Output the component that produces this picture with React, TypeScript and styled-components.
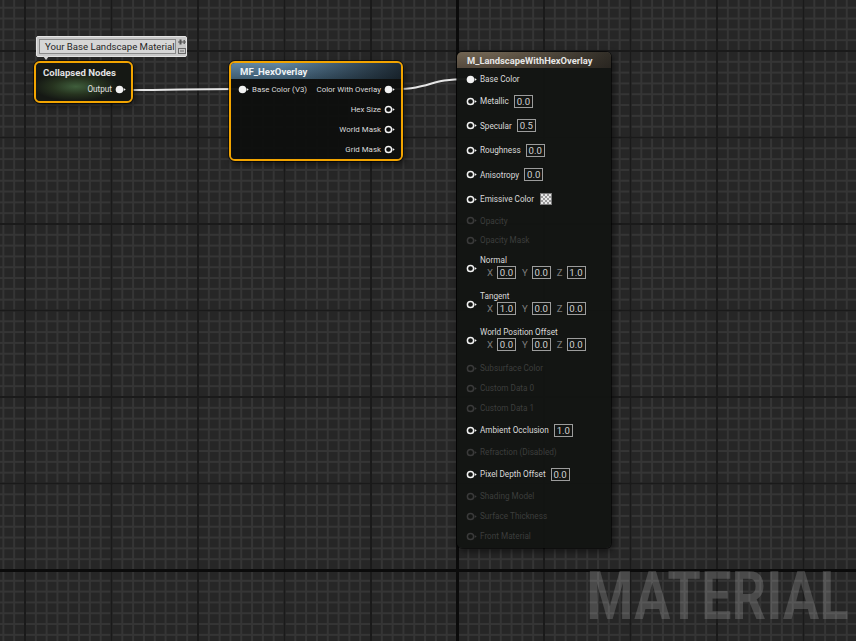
import React from "react";
import styled, { createGlobalStyle } from "styled-components";

const Global = createGlobalStyle`
  html, body { margin: 0; padding: 0; background: #262626; }
  body { font-family: Roboto, "Noto Sans", "Liberation Sans", sans-serif; }
  #root { width: 856px; height: 641px; }
`;

const Canvas = styled.div`
  position: relative;
  width: 856px;
  height: 641px;
  overflow: hidden;
  background-color: #262626;
  background-image:
    linear-gradient(to right, #0b0b0b 0 3px, transparent 3px),
    linear-gradient(to bottom, #0b0b0b 0 3px, transparent 3px),
    linear-gradient(to right, #1a1a1a 0 2px, transparent 2px),
    linear-gradient(to bottom, #1a1a1a 0 2px, transparent 2px),
    linear-gradient(to right, #353535 0 2px, transparent 2px),
    linear-gradient(to bottom, #353535 0 2px, transparent 2px);
  background-size: 3px 100%, 100% 3px, 86.5px 86.5px, 86.5px 86.5px,
    10.8125px 10.8125px, 10.8125px 10.8125px;
  background-position: 456px 0, 0 569px, 24px 50px, 24px 50px, 2.4px 6.75px,
    2.4px 6.75px;
  background-repeat: no-repeat, no-repeat, repeat, repeat, repeat, repeat;
`;

const Wires = styled.svg`
  position: absolute;
  left: 0;
  top: 0;
  width: 856px;
  height: 641px;
  pointer-events: none;
`;

/* ---------- pins ---------- */
const PinSvg = styled.svg`
  flex: none;
  width: 11px;
  height: 9px;
  display: block;
`;

type PinProps = { filled?: boolean; disabled?: boolean };
const Pin = ({ filled, disabled }: PinProps) => {
  const c = disabled ? "#3a3a3a" : "#f2f2f2";
  return (
    <PinSvg viewBox="0 0 11 9">
      {filled ? (
        <circle cx="4.5" cy="4.5" r="3.8" fill={c} />
      ) : (
        <circle cx="4.5" cy="4.5" r="3.1" fill="none" stroke={c} strokeWidth="1.5" />
      )}
      <polygon points="8.7,2.9 10.7,4.5 8.7,6.1" fill={c} />
    </PinSvg>
  );
};

/* ---------- comment bubble ---------- */
const Comment = styled.div`
  position: absolute;
  left: 36px;
  top: 36px;
  width: 151px;
  height: 21px;
  box-sizing: border-box;
  padding: 2px 1px 2px 2px;
  display: flex;
  gap: 2px;
  background: #c9c9c9;
  border: 1px solid #e4e4e4;
  border-radius: 2px;
  &::after {
    content: "";
    position: absolute;
    left: 6px;
    bottom: -4px;
    width: 0;
    height: 0;
    border-left: 3px solid transparent;
    border-right: 3px solid transparent;
    border-top: 4px solid #d8d8d8;
  }
`;

const CommentText = styled.div`
  flex: 1;
  display: flex;
  align-items: center;
  padding-left: 5px;
  border: 1px solid #8a8a8a;
  background: #d6d6d6;
  color: #262626;
  font-size: 9.6px;
  white-space: nowrap;
`;

const CommentIcons = styled.div`
  flex: none;
  display: flex;
  flex-direction: column;
  justify-content: space-between;
  width: 8px;
`;

const TinyIcon = styled.svg`
  display: block;
  width: 8px;
  height: 6px;
`;

/* ---------- generic node frame ---------- */
const SelectedNode = styled.div<{ $x: number; $y: number; $w: number; $h: number }>`
  position: absolute;
  left: ${(p) => p.$x}px;
  top: ${(p) => p.$y}px;
  width: ${(p) => p.$w}px;
  height: ${(p) => p.$h}px;
  box-sizing: border-box;
  border: 2px solid #f2a400;
  border-radius: 6px;
  box-shadow: 0 0 0 1px rgba(0, 0, 0, 0.55), 2px 3px 6px rgba(0, 0, 0, 0.5);
  overflow: hidden;
  display: flex;
  flex-direction: column;
`;

/* collapsed node */
const CollapsedBody = styled.div`
  flex: 1;
  display: flex;
  flex-direction: column;
  background: radial-gradient(ellipse 45% 38% at 42% 62%, #3f5e3c 0%, #26331f 55%, #151814 100%);
  border-radius: 4px;
`;

const CollapsedTitle = styled.div`
  padding: 4px 0 0 7px;
  height: 14px;
  color: #e2e2e2;
  font-size: 9.6px;
  font-weight: 700;
  white-space: nowrap;
`;

const OutRow = styled.div`
  display: flex;
  align-items: center;
  justify-content: flex-end;
  gap: 3px;
  height: 16px;
  padding-right: 5px;
  color: #e0e0e0;
  font-size: 8.2px;
`;

/* function node */
const FuncHeader = styled.div`
  height: 16px;
  padding-left: 9px;
  display: flex;
  align-items: center;
  background-image: linear-gradient(to right, rgba(0, 0, 0, 0) 30%, rgba(10, 14, 18, 0.75) 100%),
    linear-gradient(to bottom, #6186a3 0%, #3e5c71 100%);
  color: #eef2f5;
  font-size: 9.6px;
  font-weight: 700;
`;

const FuncBody = styled.div`
  flex: 1;
  background: rgba(14, 15, 14, 0.96);
  display: flex;
  flex-direction: column;
`;

const FuncRow = styled.div`
  height: 20px;
  display: flex;
  align-items: center;
  justify-content: space-between;
  padding: 0 6px 0 7px;
  color: #dcdcdc;
  font-size: 7.9px;
  white-space: nowrap;
`;

const PinGroup = styled.div`
  display: flex;
  align-items: center;
  gap: 3px;
`;

/* material result node */
const MatNode = styled.div`
  position: absolute;
  left: 457px;
  top: 52px;
  width: 154px;
  border-radius: 5px;
  background: rgba(19, 21, 19, 0.97);
  box-shadow: 0 0 0 1px rgba(0, 0, 0, 0.55), 2px 3px 7px rgba(0, 0, 0, 0.55);
  overflow: hidden;
  display: flex;
  flex-direction: column;
  padding-bottom: 2px;
`;

const MatHeader = styled.div`
  height: 16px;
  padding-left: 10px;
  display: flex;
  align-items: center;
  background-image: linear-gradient(to right, rgba(0, 0, 0, 0) 20%, rgba(22, 22, 20, 0.7) 100%),
    linear-gradient(to bottom, #716553 0%, #54493d 100%);
  color: #e6e6e6;
  font-size: 9.4px;
  font-weight: 700;
  white-space: nowrap;
  margin-bottom: 1px;
`;

const MatRow = styled.div<{ $h: number }>`
  height: ${(p) => p.$h}px;
  display: flex;
  align-items: center;
  gap: 3px;
  padding-left: 9px;
`;

const Label = styled.span<{ $off?: boolean }>`
  color: ${(p) => (p.$off ? "#3c3d3c" : "#dadada")};
  font-size: 8.2px;
  white-space: nowrap;
`;

const ValueBox = styled.span`
  display: inline-flex;
  align-items: center;
  justify-content: center;
  box-sizing: border-box;
  min-width: 19px;
  height: 13px;
  padding: 0 1px;
  border: 1px solid #9c9c9c;
  color: #d0d0d0;
  font-size: 9.6px;
  margin-left: 2px;
`;

const Swatch = styled.span`
  width: 12px;
  height: 12px;
  margin-left: 3px;
  box-sizing: border-box;
  border: 1px solid #7a7a7a;
  background-color: #e8e8e8;
  background-image: linear-gradient(45deg, #9a9a9a 25%, transparent 25%, transparent 75%, #9a9a9a 75%),
    linear-gradient(45deg, #9a9a9a 25%, transparent 25%, transparent 75%, #9a9a9a 75%);
  background-size: 4px 4px;
  background-position: 0 0, 2px 2px;
`;

const VecBlock = styled.div`
  display: flex;
  flex-direction: column;
  justify-content: center;
  gap: 1px;
  padding-bottom: 3px;
  align-self: stretch;
`;

const VecValues = styled.div`
  display: flex;
  align-items: center;
  padding-left: 7px;
  gap: 2px;
`;

const Axis = styled.span`
  color: #7c7c7c;
  font-size: 9.6px;
  margin-left: 4px;
  &:first-child {
    margin-left: 0;
  }
`;

const Watermark = styled.div`
  position: absolute;
  right: 7px;
  top: 563px;
  color: rgba(255, 255, 255, 0.17);
  font-family: Roboto, "Liberation Sans", sans-serif;
  font-weight: 700;
  font-size: 67px;
  line-height: 67px;
  letter-spacing: 0.5px;
  transform: scaleX(0.8);
  transform-origin: right center;
  white-space: nowrap;
`;

type Row =
  | { kind: "plain"; label: string; h: number; off?: boolean; filled?: boolean }
  | { kind: "value"; label: string; h: number; value: string }
  | { kind: "swatch"; label: string; h: number }
  | { kind: "vec"; label: string; h: number; v: [string, string, string] };

const rows: Row[] = [
  { kind: "plain", label: "Base Color", h: 20, filled: true },
  { kind: "value", label: "Metallic", h: 24, value: "0.0" },
  { kind: "value", label: "Specular", h: 25, value: "0.5" },
  { kind: "value", label: "Roughness", h: 24, value: "0.0" },
  { kind: "value", label: "Anisotropy", h: 25, value: "0.0" },
  { kind: "swatch", label: "Emissive Color", h: 24 },
  { kind: "plain", label: "Opacity", h: 19, off: true },
  { kind: "plain", label: "Opacity Mask", h: 20, off: true },
  { kind: "vec", label: "Normal", h: 36, v: ["0.0", "0.0", "1.0"] },
  { kind: "vec", label: "Tangent", h: 36, v: ["1.0", "0.0", "0.0"] },
  { kind: "vec", label: "World Position Offset", h: 36, v: ["0.0", "0.0", "0.0"] },
  { kind: "plain", label: "Subsurface Color", h: 20, off: true },
  { kind: "plain", label: "Custom Data 0", h: 20, off: true },
  { kind: "plain", label: "Custom Data 1", h: 20, off: true },
  { kind: "value", label: "Ambient Occlusion", h: 24, value: "1.0" },
  { kind: "plain", label: "Refraction (Disabled)", h: 20, off: true },
  { kind: "value", label: "Pixel Depth Offset", h: 24, value: "0.0" },
  { kind: "plain", label: "Shading Model", h: 20, off: true },
  { kind: "plain", label: "Surface Thickness", h: 20, off: true },
  { kind: "plain", label: "Front Material", h: 20, off: true },
];

const MatRowView = ({ row }: { row: Row }) => {
  const off = row.kind === "plain" && row.off;
  const filled = row.kind === "plain" && row.filled;
  return (
    <MatRow $h={row.h}>
      <Pin filled={filled} disabled={off} />
      {row.kind === "vec" ? (
        <VecBlock>
          <Label>{row.label}</Label>
          <VecValues>
            <Axis>X</Axis>
            <ValueBox>{row.v[0]}</ValueBox>
            <Axis>Y</Axis>
            <ValueBox>{row.v[1]}</ValueBox>
            <Axis>Z</Axis>
            <ValueBox>{row.v[2]}</ValueBox>
          </VecValues>
        </VecBlock>
      ) : (
        <>
          <Label $off={off}>{row.label}</Label>
          {row.kind === "value" && <ValueBox>{row.value}</ValueBox>}
          {row.kind === "swatch" && <Swatch />}
        </>
      )}
    </MatRow>
  );
};

const funcOutputs = ["Hex Size", "World Mask", "Grid Mask"];

export default function App() {
  return (
    <>
      <Global />
      <Canvas>
        <Wires viewBox="0 0 856 641">
          <path d="M124 90 C 180 90, 182 89, 238 89" stroke="#e6e6e6" strokeWidth="2" fill="none" />
          <path d="M394 89 C 432 89, 428 79, 467 79" stroke="#e6e6e6" strokeWidth="2" fill="none" />
        </Wires>

        <Comment>
          <CommentText>Your Base Landscape Material</CommentText>
          <CommentIcons>
            <TinyIcon viewBox="0 0 8 6">
              <line x1="0" y1="3" x2="8" y2="3" stroke="#555" strokeWidth="1" />
              <rect x="1.5" y="0.5" width="2" height="5" fill="#555" />
              <rect x="5.5" y="1" width="1.5" height="4" fill="#666" />
            </TinyIcon>
            <TinyIcon viewBox="0 0 8 6">
              <rect x="0.5" y="0.5" width="7" height="5" fill="none" stroke="#6a6a6a" strokeWidth="1" />
              <line x1="2" y1="3" x2="6" y2="3" stroke="#6a6a6a" strokeWidth="1" />
            </TinyIcon>
          </CommentIcons>
        </Comment>

        <SelectedNode $x={34} $y={61} $w={99} $h={42}>
          <CollapsedBody>
            <CollapsedTitle>Collapsed Nodes</CollapsedTitle>
            <OutRow>
              Output
              <Pin filled />
            </OutRow>
          </CollapsedBody>
        </SelectedNode>

        <SelectedNode $x={229} $y={61} $w={174} $h={100}>
          <FuncHeader>MF_HexOverlay</FuncHeader>
          <FuncBody>
            <FuncRow>
              <PinGroup>
                <Pin filled />
                Base Color (V3)
              </PinGroup>
              <PinGroup>
                Color With Overlay
                <Pin filled />
              </PinGroup>
            </FuncRow>
            {funcOutputs.map((o) => (
              <FuncRow key={o}>
                <span />
                <PinGroup>
                  {o}
                  <Pin />
                </PinGroup>
              </FuncRow>
            ))}
          </FuncBody>
        </SelectedNode>

        <MatNode>
          <MatHeader>M_LandscapeWithHexOverlay</MatHeader>
          {rows.map((r) => (
            <MatRowView key={r.label} row={r} />
          ))}
        </MatNode>

        <Watermark>MATERIAL</Watermark>
      </Canvas>
    </>
  );
}
